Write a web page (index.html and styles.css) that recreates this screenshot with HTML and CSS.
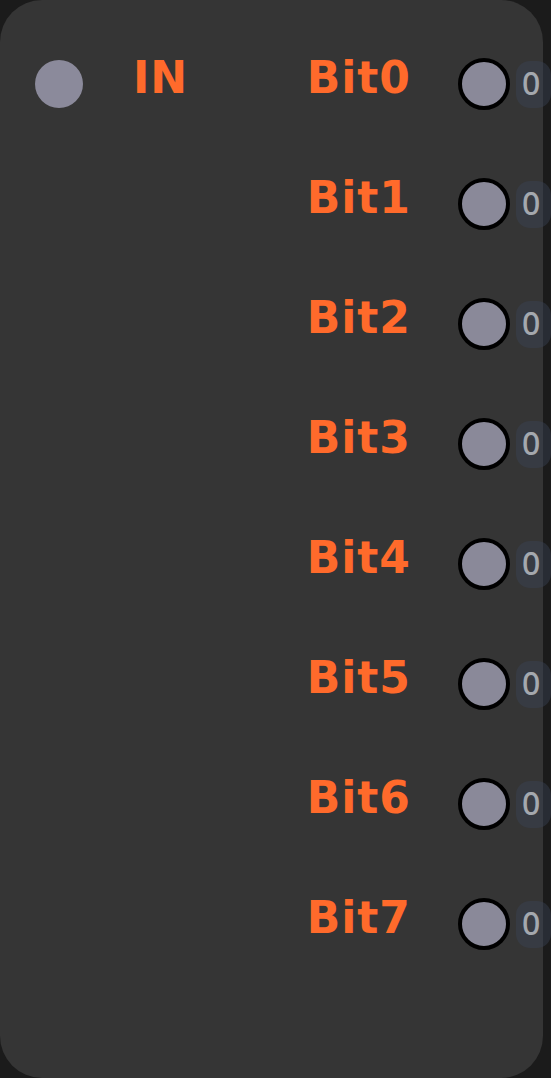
FILE: index.html
```html
<!DOCTYPE html>
<html lang="en">
<head>
    <meta charset="UTF-8">
    <meta name="viewport" content="width=device-width, initial-scale=1.0">
    <title>Byte Split Node</title>
    <link rel="stylesheet" href="styles.css">
</head>
<body>
    <div class="node">
        <div class="input">
            <span class="socket"></span>
            <span class="label">IN</span>
        </div>

        <div class="outputs">
            <div class="row"><span class="label">Bit0</span><span class="socket out"></span><span class="value">0</span></div>
            <div class="row"><span class="label">Bit1</span><span class="socket out"></span><span class="value">0</span></div>
            <div class="row"><span class="label">Bit2</span><span class="socket out"></span><span class="value">0</span></div>
            <div class="row"><span class="label">Bit3</span><span class="socket out"></span><span class="value">0</span></div>
            <div class="row"><span class="label">Bit4</span><span class="socket out"></span><span class="value">0</span></div>
            <div class="row"><span class="label">Bit5</span><span class="socket out"></span><span class="value">0</span></div>
            <div class="row"><span class="label">Bit6</span><span class="socket out"></span><span class="value">0</span></div>
            <div class="row"><span class="label">Bit7</span><span class="socket out"></span><span class="value">0</span></div>
        </div>
    </div>
</body>
</html>
```

FILE: styles.css
```css
body {
    margin: 0;
    background-color: #1b1b1b;
    font-family: "DejaVu Sans", sans-serif;
    overflow: hidden;
}
.node {
    display: flex;
    box-sizing: border-box;
    width: 543px;
    height: 1078px;
    padding-top: 24px;
    background: #353535;
    border-radius: 42px;
}
.input {
    display: flex;
    align-items: center;
    gap: 50px;
    height: 120px;
    padding-left: 35px;
}
.label {
    color: #ff6a2b; /* laranja das portas */
    font-weight: bold;
    font-size: 44px;
    letter-spacing: 1px;
    line-height: 1;
    margin-bottom: 12px;
}
.socket {
    display: block;
    width: 48px;
    height: 48px;
    border-radius: 50%;
    background: #8b8a9b;
}
.socket.out {
    box-sizing: border-box;
    width: 52px;
    height: 52px;
    border: 4px solid #000;
    background: #8a8999;
    margin-left: 47px;
}
.outputs {
    display: flex;
    flex-direction: column;
    margin-left: auto;
    margin-right: -8px;
}
.row {
    display: flex;
    align-items: center;
    justify-content: flex-end;
    height: 120px;
}
.value {
    display: block;
    box-sizing: border-box;
    width: 35px;
    margin-left: 6px;
    padding: 6px 0 9px 6px;
    border-radius: 14px;
    background: rgba(58, 66, 84, 0.45);
    color: #a4a8ae;
    font-family: "Noto Sans", sans-serif;
    font-weight: 500;
    font-size: 32px;
    line-height: 1;
}
```
